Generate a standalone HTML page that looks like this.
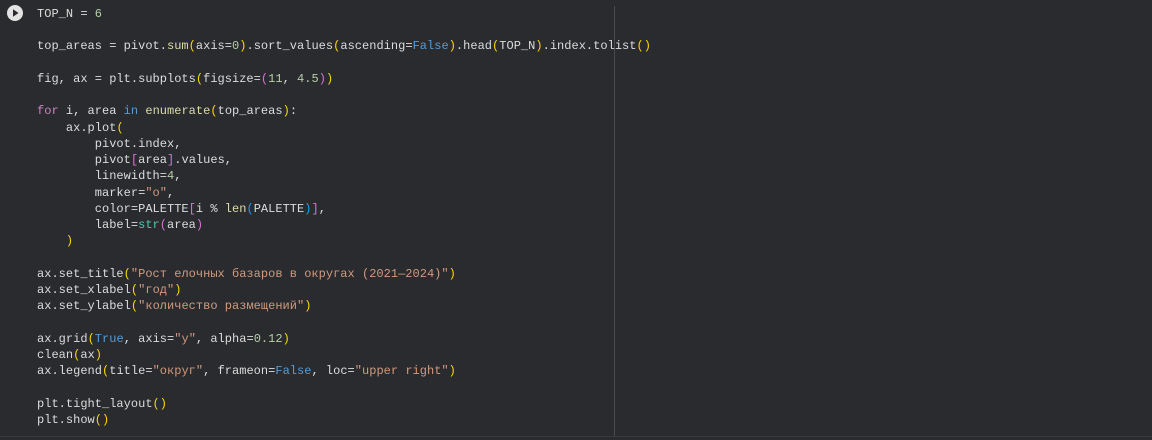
<!DOCTYPE html>
<html><head><meta charset="utf-8"><style>
html,body{margin:0;padding:0;background:#2a2b2e;width:1152px;height:440px;overflow:hidden}
.code{position:absolute;left:37px;top:6px;font-family:"Liberation Mono","DejaVu Sans Mono",monospace;font-size:12px;letter-spacing:0.02px;line-height:16.24px;color:#dcdcdc;white-space:pre;margin:0}
.s{color:#d19a7e}.n{color:#b5cea8}.k{color:#c586c0}.b{color:#569cd6}.f{color:#dcdcaa}.t{color:#4ec9b0}
.p1{color:#ffd700}.p2{color:#da70d6}.p3{color:#179fff}
.div{position:absolute;left:614px;top:6px;width:1px;height:430px;background:#4a4b4e}
.bot{position:absolute;left:0;top:436px;width:1152px;height:1px;background:#3a3b3e}
</style></head><body>
<svg style="position:absolute;left:6px;top:4px" width="18" height="18" viewBox="0 0 18 18"><circle cx="9" cy="9" r="8" fill="#e3e3e3"/><path d="M7 5.3 L12.5 9 L7 12.7Z" fill="#2a2b2e"/></svg>
<div class="div"></div><div class="bot"></div>
<pre class="code">TOP_N = <span class="n">6</span>

top_areas = pivot.<span class="f">sum</span><span class="p1">(</span>axis=<span class="n">0</span><span class="p1">)</span>.sort_values<span class="p1">(</span>ascending=<span class="b">False</span><span class="p1">)</span>.head<span class="p1">(</span>TOP_N<span class="p1">)</span>.index.tolist<span class="p1">()</span>

fig, ax = plt.subplots<span class="p1">(</span>figsize=<span class="p2">(</span><span class="n">11</span>, <span class="n">4.5</span><span class="p2">)</span><span class="p1">)</span>

<span class="k">for</span> i, area <span class="b">in</span> <span class="f">enumerate</span><span class="p1">(</span>top_areas<span class="p1">)</span>:
    ax.plot<span class="p1">(</span>
        pivot.index,
        pivot<span class="p2">[</span>area<span class="p2">]</span>.values,
        linewidth=<span class="n">4</span>,
        marker=<span class="s">"o"</span>,
        color=PALETTE<span class="p2">[</span>i % <span class="f">len</span><span class="p3">(</span>PALETTE<span class="p3">)</span><span class="p2">]</span>,
        label=<span class="t">str</span><span class="p2">(</span>area<span class="p2">)</span>
    <span class="p1">)</span>

ax.set_title<span class="p1">(</span><span class="s">"Рост елочных базаров в округах (2021—2024)"</span><span class="p1">)</span>
ax.set_xlabel<span class="p1">(</span><span class="s">"год"</span><span class="p1">)</span>
ax.set_ylabel<span class="p1">(</span><span class="s">"количество размещений"</span><span class="p1">)</span>

ax.grid<span class="p1">(</span><span class="b">True</span>, axis=<span class="s">"y"</span>, alpha=<span class="n">0.12</span><span class="p1">)</span>
clean<span class="p1">(</span>ax<span class="p1">)</span>
ax.legend<span class="p1">(</span>title=<span class="s">"округ"</span>, frameon=<span class="b">False</span>, loc=<span class="s">"upper right"</span><span class="p1">)</span>

plt.tight_layout<span class="p1">()</span>
plt.show<span class="p1">()</span></pre>
</body></html>
